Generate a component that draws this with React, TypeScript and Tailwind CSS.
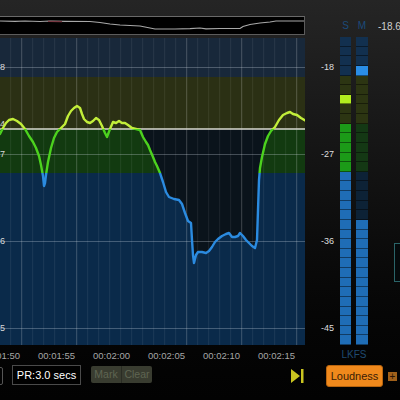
import React from "react";

const curve: [number, number][] = [
  [0, 134], [3, 128], [6, 123], [9, 120], [13, 119], [17, 121], [21, 124], [25, 129], [29, 136], [33, 142],
  [36, 148], [39, 156], [41, 165], [43, 176], [44, 186], [45, 183], [46, 175], [48, 162], [51, 148], [54, 138],
  [57, 132], [61, 128], [65, 124], [68, 116], [71, 111], [74, 108], [77, 106], [80, 108], [82, 114], [84, 119],
  [87, 122], [90, 123], [93, 121], [96, 118], [99, 120], [102, 126], [105, 133], [107, 137], [110, 129], [113, 122],
  [116, 123], [119, 121], [122, 123], [125, 123], [128, 125], [132, 128], [136, 129], [140, 130], [143, 137], [146, 142],
  [148, 145], [150, 150], [153, 157], [155, 162], [157, 166], [160, 173], [163, 182], [166, 192], [169, 197], [174, 199],
  [179, 200], [182, 204], [185, 213], [188, 221], [191, 223], [192, 240], [193, 255], [194, 263], [196, 255], [198, 252],
  [202, 252], [206, 253], [209, 251], [212, 247], [215, 242], [218, 239], [222, 236], [226, 234], [229, 233], [232, 237],
  [235, 237], [238, 236], [240, 233], [243, 236], [246, 240], [249, 243], [252, 246], [255, 248], [257, 240], [258, 210],
  [259, 180], [260, 168], [262, 157], [265, 144], [268, 136], [271, 131], [275, 127], [279, 120], [283, 115], [287, 113],
  [290, 112], [293, 114], [297, 115], [301, 118], [306, 121],
];

const TOP = 38;
const pts = curve.map(([x, y]) => [x, y - TOP] as [number, number]);
const curvePath = "M" + pts.map(([x, y]) => `${x} ${y}`).join(" L");
const darkPts = pts.filter(([x]) => x >= 136 && x <= 275);
const darkPoly = [...darkPts, [275, 91], [136, 91]].map(([x, y]) => `${x},${y}`).join(" ");

const overview: [number, number][] = [
  [0, 21], [15, 21.3], [25, 21], [40, 21.5], [50, 21], [65, 21.3], [90, 21.5], [100, 22.5], [110, 24], [120, 25],
  [140, 26], [155, 29], [175, 29], [190, 28.7], [200, 28], [206, 28.8], [220, 28.5], [240, 28.5], [243, 26.5],
  [250, 24.5], [260, 23], [270, 22], [276, 21], [306, 21],
];
const overviewPath = "M" + overview.map(([x, y]) => `${x} ${y - 16}`).join(" L");

const vLines: { x: number; major: boolean }[] = [];
for (let k = 0; k < 28; k++) {
  const x = 10.7 + 11 * k;
  vLines.push({ x, major: Math.abs(((x - 21.7) % 55 + 55) % 55) < 0.01 });
}

function Graph() {
  const H = 307;
  return (
    <svg width={305} height={H} className="block">
      <defs>
        <clipPath id="cTop"><rect x={0} y={0} width={305} height={91} /></clipPath>
        <clipPath id="cMid"><rect x={0} y={91} width={305} height={44} /></clipPath>
        <clipPath id="cBot"><rect x={0} y={135} width={305} height={200} /></clipPath>
        <clipPath id="cDark"><rect x={0} y={91} width={305} height={240} /></clipPath>
      </defs>
      <rect x={0} y={0} width={305} height={39} fill="#18283a" />
      <rect x={0} y={39} width={305} height={52} fill="#2b3014" />
      <rect x={0} y={91} width={305} height={44} fill="#123a10" />
      <rect x={0} y={135} width={305} height={H - 135} fill="#0a2a4a" />
      <polygon points={darkPoly} fill="#0a131b" clipPath="url(#cDark)" />
      {vLines.map((l, i) => (
        <line key={i} x1={l.x} x2={l.x} y1={0} y2={H} stroke={l.major ? "rgba(255,255,255,0.22)" : "rgba(255,255,255,0.08)"} strokeWidth={1} />
      ))}
      {[29, 116, 203, 290].map((y) => (
        <line key={y} x1={0} x2={305} y1={y + 0.5} y2={y + 0.5} stroke="rgba(220,230,240,0.28)" strokeWidth={1} />
      ))}
      <line x1={0} x2={305} y1={91} y2={91} stroke="#d8d8d0" strokeWidth={1.3} />
      <g fontFamily="Liberation Sans, Arial, sans-serif" fontSize={9} fill="#d8d8d8" textAnchor="end">
        <text x={5} y={32}>-18</text>
        <text x={5} y={89}>-24</text>
        <text x={5} y={119}>-27</text>
        <text x={5} y={206}>-36</text>
        <text x={5} y={293}>-45</text>
      </g>
      <g fill="none" strokeWidth={2.4} strokeLinejoin="round" strokeLinecap="round">
        <path d={curvePath} stroke="#c2ee3a" clipPath="url(#cTop)" />
        <path d={curvePath} stroke="#4cd21e" clipPath="url(#cMid)" />
        <path d={curvePath} stroke="#2b8be0" clipPath="url(#cBot)" />
      </g>
    </svg>
  );
}

function Overview() {
  return (
    <div className="h-[19px] w-[305px] bg-black border border-l-0 border-[#5c5c5c] border-t-[#6a6a6a]">
      <svg width={304} height={17} className="block">
        <path d={overviewPath} transform="translate(0,-1)" fill="none" stroke="#a8a8a8" strokeWidth={1.2} />
        <path d="M48 4.3 L62 4.6" fill="none" stroke="#7a3a44" strokeWidth={1.2} />
      </svg>
    </div>
  );
}

const times = ["00:01:50", "00:01:55", "00:02:00", "00:02:05", "00:02:10", "00:02:15"];

const DB = "#12304f";
const DO = "#2c3512";
const LIME = "#b2ee1e";
const GR = "#1c9a18";
const BL = "#1f6db6";
const BL2 = "#2a8ee6";
const DG = "#143814";
const DB2 = "#0d2236";

const sCols: string[] = Array.from({ length: 32 }, (_, i) =>
  i <= 3 ? DB : i <= 5 ? DO : i === 6 ? LIME : i <= 8 ? DO : i <= 13 ? GR : BL
);
const mCols: string[] = Array.from({ length: 32 }, (_, i) =>
  i <= 2 ? DB : i === 3 ? BL2 : i <= 8 ? DO : i <= 13 ? DG : i <= 18 ? DB2 : BL
);

function Meter({ cols, w }: { cols: string[]; w: string }) {
  return (
    <div className={`${w} h-[308px] flex flex-col shrink-0`}>
      {cols.map((c, i) => (
        <div key={i} className="flex-1 border-b border-black/45" style={{ backgroundColor: c }} />
      ))}
    </div>
  );
}

export default function App() {
  return (
    <div className="w-[400px] h-[400px] overflow-hidden flex flex-col bg-linear-to-b from-[#252525] via-[#101010] to-[#020202] font-['Liberation_Sans',Arial,sans-serif]">
      <div className="flex h-[362px] shrink-0">
        <div className="w-[305px] shrink-0 flex flex-col pt-[16px]">
          <Overview />
          <div className="h-[3px]" />
          <Graph />
          <div className="flex -ml-[35px] pt-[5px] text-[9.5px] leading-[12px] text-[#a6a6a6] whitespace-nowrap">
            {times.map((t) => (
              <div key={t} className="w-[55px] shrink-0 text-right">{t}</div>
            ))}
          </div>
        </div>
        <div className="w-[29px] shrink-0 flex flex-col pt-[62px] gap-[77px] text-[9px] leading-[10px] text-[#dedede] text-right">
          <div>-18</div>
          <div>-27</div>
          <div>-36</div>
          <div>-45</div>
        </div>
        <div className="ml-[6px] w-[28px] shrink-0 flex flex-col items-center">
          <div className="h-[37px] w-full flex gap-[5px] pt-[21px] text-[10px] leading-[10px] text-[#1b4b7a]">
            <div className="w-[11px] text-center">S</div>
            <div className="w-[12px] text-center">M</div>
          </div>
          <div className="flex gap-[5px]">
            <Meter cols={sCols} w="w-[11px]" />
            <Meter cols={mCols} w="w-[12px]" />
          </div>
          <div className="pt-[5px] text-[10px] leading-[10px] text-[#1f4a70]">LKFS</div>
        </div>
        <div className="flex-1 min-w-0 overflow-hidden flex flex-col pt-[22px] whitespace-nowrap">
          <div className="pl-[10px] text-[10px] leading-[10px] text-[#cfcfcf]">-18.6</div>
          <div className="ml-[26px] mt-[211px] h-[39px] w-[20px] shrink-0 border border-[#2a6468] bg-[#050a0c]" />
        </div>
      </div>
      <div className="flex items-start mt-[3px]">
        <div className="-ml-[17px] mt-[2px] w-[20px] h-[18px] border border-[#555] rounded-[2px] shrink-0" />
        <div className="ml-[9px] w-[69px] h-[20px] border border-[#4a4a4a] bg-black text-white text-[11px] leading-[18px] text-center shrink-0">
          PR:3.0 secs
        </div>
        <div className="ml-[10px] mt-[1px] h-[17px] w-[61px] flex bg-[#393c30] rounded-[2px] text-[10.5px] leading-[17px] text-[#5f6552] shrink-0">
          <div className="w-[31px] text-center border-r border-[#2a2c24]">Mark</div>
          <div className="flex-1 text-center">Clear</div>
        </div>
        <svg width={13} height={14} className="ml-[139px] mt-[4px] shrink-0">
          <polygon points="0,0 9,7 0,14" fill="#c9c420" />
          <rect x={10} y={0} width={2.5} height={14} fill="#c9c420" />
        </svg>
        <div className="ml-[22px] w-[57px] h-[22px] bg-[#f0891c] border border-[#b8640e] rounded-[3px] text-[11px] leading-[20px] text-center text-[#3a1c05] shrink-0">
          Loudness
        </div>
        <div className="ml-[5px] mt-[7px] w-[9px] h-[9px] bg-[#a0601a] flex items-center justify-center text-[10px] leading-[9px] text-[#2a1505] shrink-0">
          +
        </div>
      </div>
    </div>
  );
}
